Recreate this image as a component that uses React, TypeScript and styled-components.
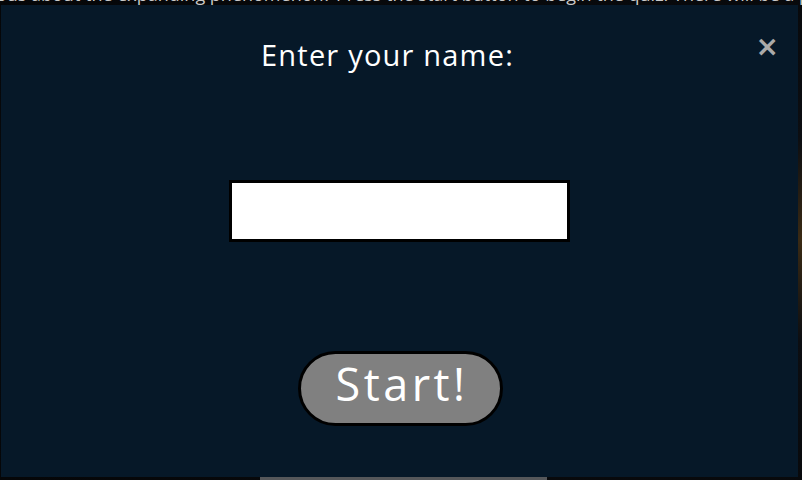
import React from "react";
import styled, { createGlobalStyle } from "styled-components";

const Global = createGlobalStyle`
  html, body { margin: 0; padding: 0; background: #0b0d10; overflow: hidden; }
  body { font-family: "Open Sans", "Liberation Sans", sans-serif; }
`;

const Page = styled.div`
  width: 802px;
  height: 480px;
  background: radial-gradient(ellipse at 100% 50%, #3a2a14 0%, #0c0e12 30%, #050608 100%);
  display: flex;
  flex-direction: column;
  align-items: center;
  overflow: hidden;
`;

const Intro = styled.p`
  margin: -17px 0 0;
  color: #c9c9c9;
  font-size: 18px;
  line-height: 22px;
  white-space: nowrap;
`;

const Spacer = styled.div`
  flex: 1;
`;

const BottomBar = styled.div`
  width: 287px;
  height: 12px;
  margin-left: 5px;
  background: #55575a;
`;

const Overlay = styled.div`
  position: fixed;
  left: 1px;
  top: 5px;
  width: 797px;
  height: 472px;
  background: #061828;
  display: flex;
  flex-direction: column;
  align-items: center;
`;

const Title = styled.h2`
  margin: 30px 0 0 -24px;
  color: #ffffff;
  font-family: "Open Sans", sans-serif;
  font-weight: 400;
  font-size: 29px;
  letter-spacing: 1.2px;
  line-height: 40px;
`;

const Close = styled.button`
  position: absolute;
  top: 22px;
  right: 19px;
  border: 0;
  background: none;
  padding: 0;
  color: #aaaaaa;
  font-family: "DejaVu Sans", sans-serif;
  font-weight: 700;
  font-size: 28px;
  line-height: 40px;
  cursor: pointer;
`;

const NameInput = styled.input`
  box-sizing: border-box;
  margin: 105px 0 0 0;
  width: 341px;
  height: 62px;
  border: 3px solid #000;
  background: #fff;
  outline: none;
  font-size: 20px;
`;

const StartButton = styled.button`
  box-sizing: border-box;
  margin: 109px 0 0 2px;
  width: 205px;
  height: 75px;
  border: 3px solid #000;
  border-radius: 38px;
  background: #808080;
  color: #fff;
  font-family: "Open Sans", sans-serif;
  font-size: 45px;
  letter-spacing: 3.5px;
  line-height: 1;
  padding: 0 0 10px 3px;
  cursor: pointer;
`;

export default function App() {
  return (
    <>
      <Global />
      <Page>
        <Intro>
          Curious about the expanding phenomenon? Press the start button to begin the quiz! There will be a prize
        </Intro>
        <Spacer />
        <BottomBar />
      </Page>
      <Overlay>
        <Close aria-label="Close">×</Close>
        <Title>Enter your name:</Title>
        <NameInput type="text" />
        <StartButton>Start!</StartButton>
      </Overlay>
    </>
  );
}
